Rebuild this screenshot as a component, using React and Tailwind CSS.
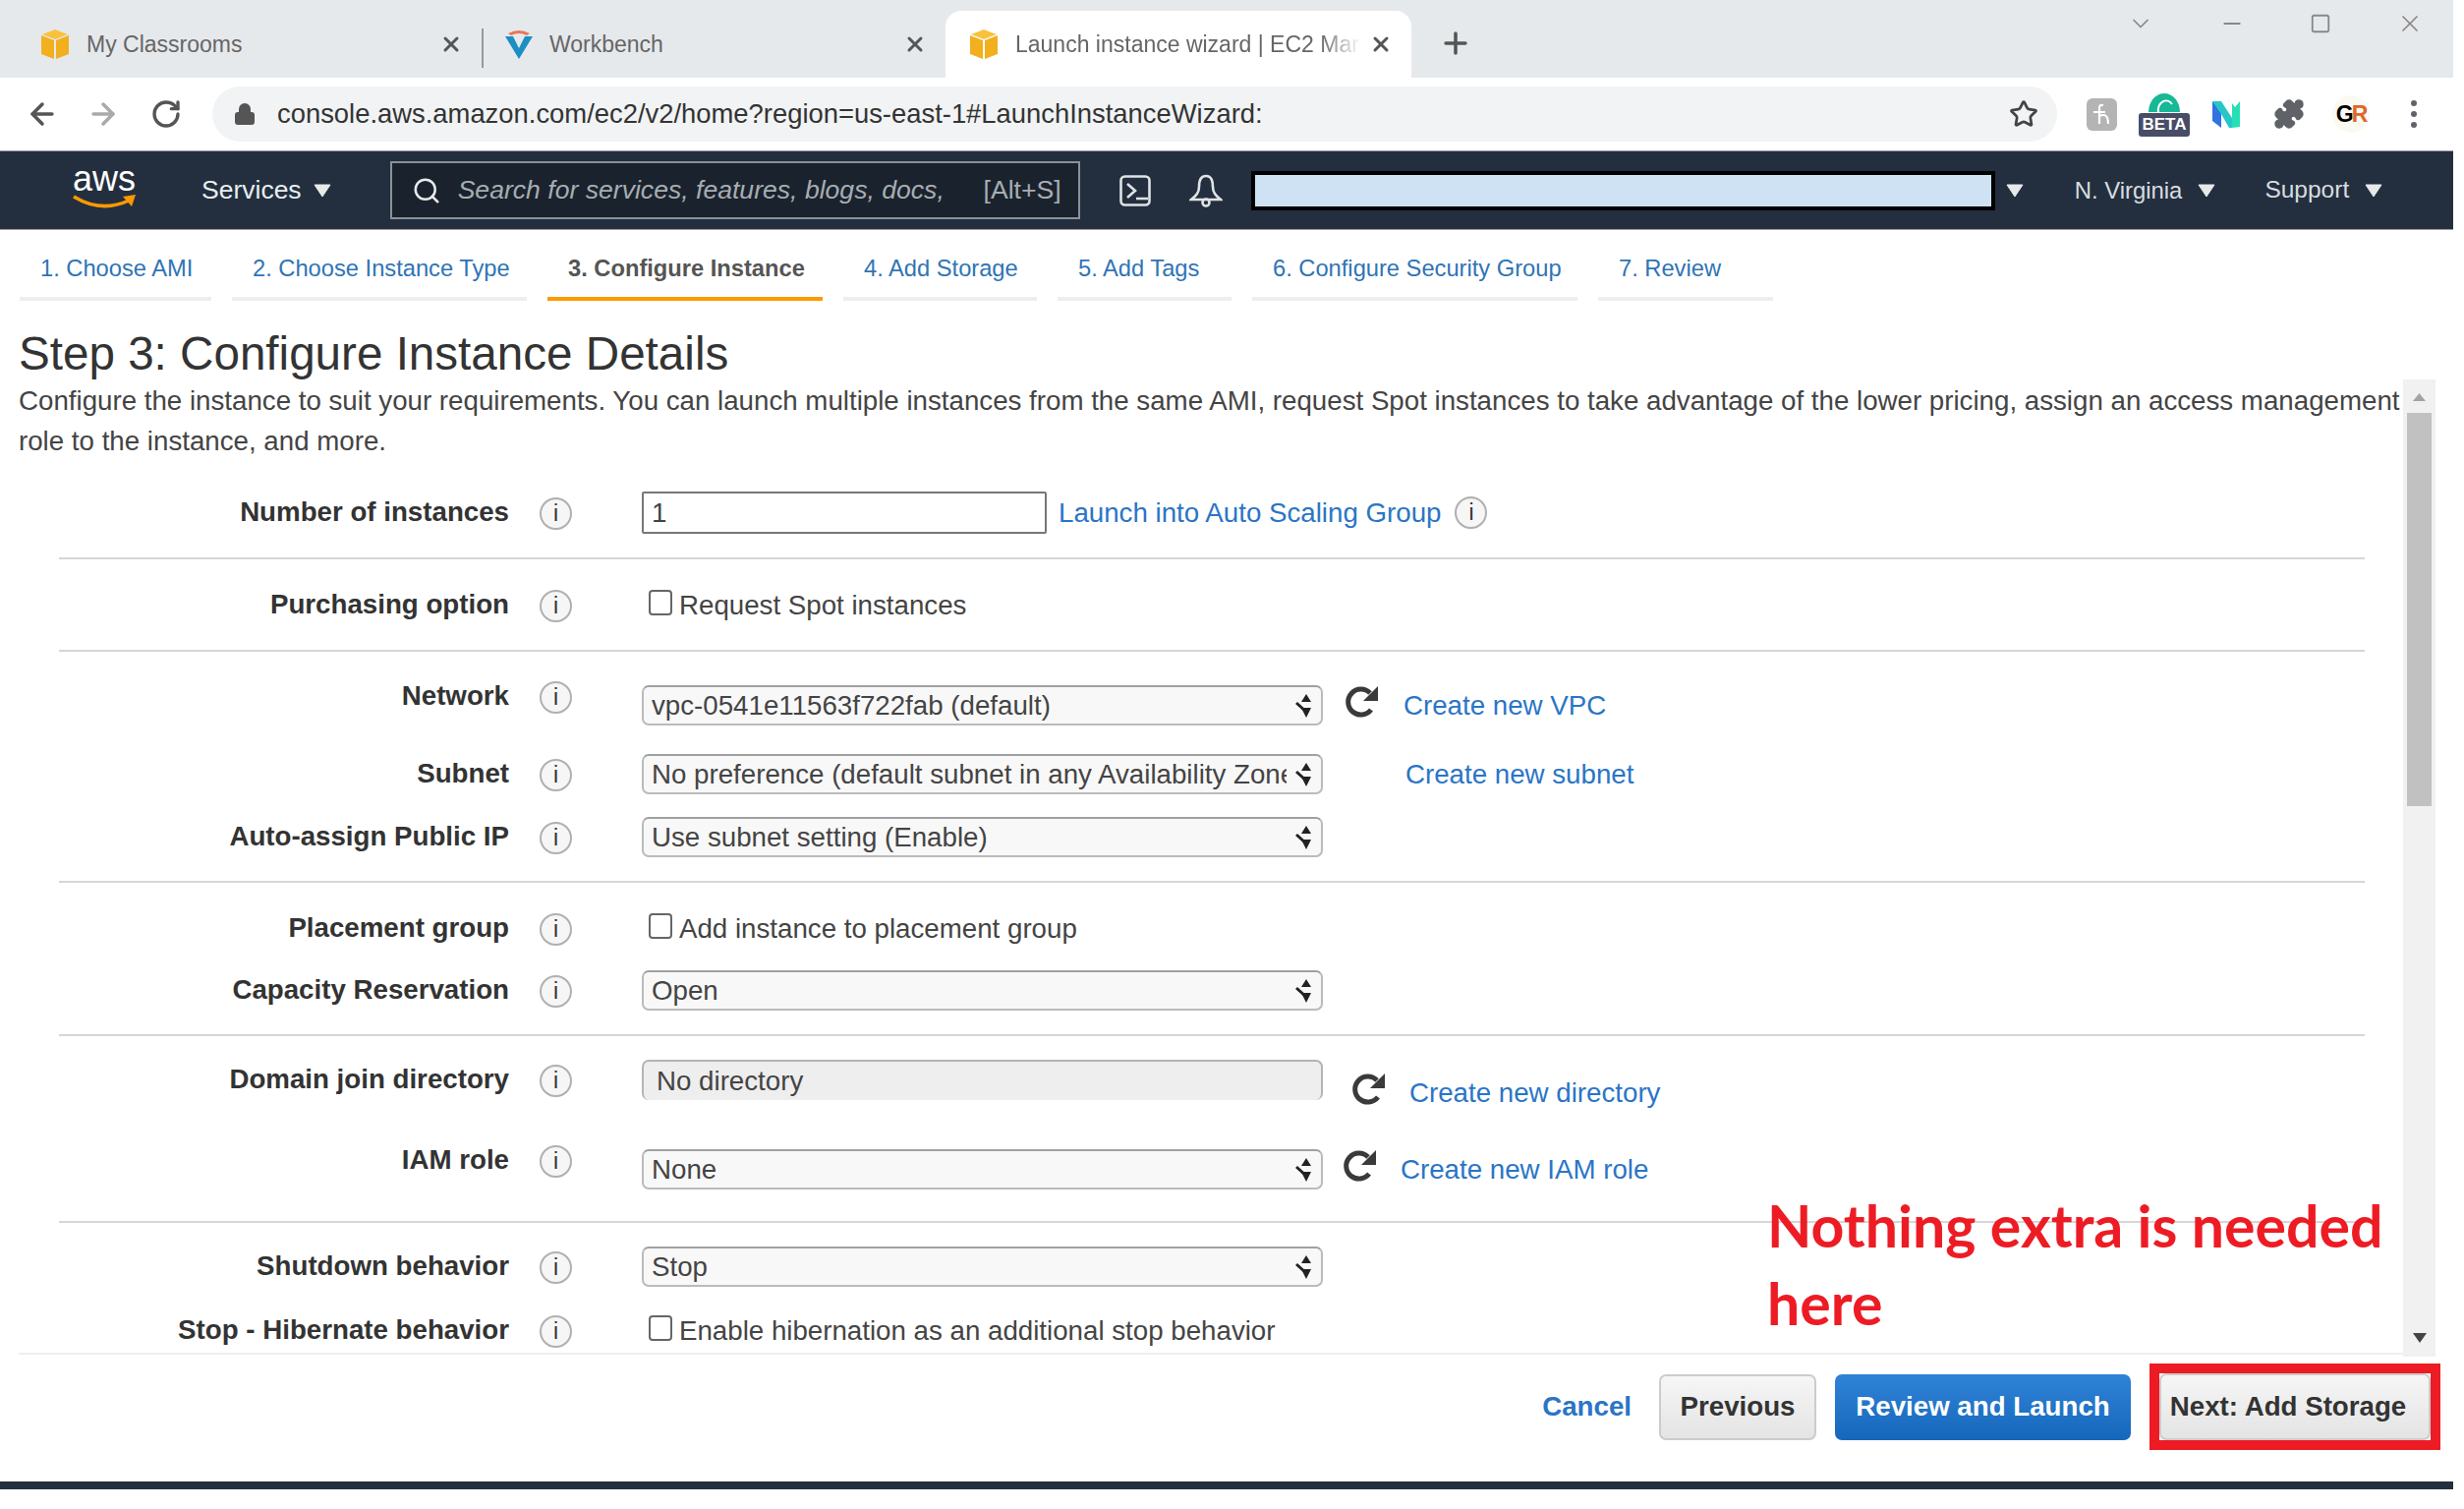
import React from 'react';
import { ArrowLeft, ArrowRight, RotateCw, Lock, Star, Plus, X, Minus, Square, ChevronDown, Search, Puzzle } from 'lucide-react';

const Cube = () => (
  <svg width="30" height="32" viewBox="0 0 30 32" className="shrink-0">
    <path d="M15 1 L28 6 L15 11 L2 6 Z" fill="#f9c23c" />
    <path d="M1 7 L14 12 V31 L1 26 Z" fill="#f2b01e" />
    <path d="M29 7 L16 12 V31 L29 26 Z" fill="#f2b01e" />
  </svg>
);

const Caret = ({ className }) => (
  <svg width="18" height="14" viewBox="0 0 18 14" className={className}><path d="M1 1H17L9 13Z" fill="#e8eaea" stroke="#e8eaea" strokeLinejoin="round" /></svg>
);

const Info = () => (
  <span className="flex h-[33px] w-[33px] shrink-0 items-center justify-center rounded-full border-2 border-[#b0b0b0] bg-[#f6f6f6] text-[23px] leading-none text-[#333]">i</span>
);

const Refresh = () => (
  <svg width="35" height="35" viewBox="0 0 35 35" fill="none" className="mt-[-6px] block">
    <path d="M27 25 A13 13 0 1 1 26 8" stroke="#3a3a3a" strokeWidth="5" />
    <path d="M34 1 V16 H19 Z" fill="#3a3a3a" />
  </svg>
);

const Select = ({ value }) => (
  <div className="flex h-[41px] w-[693px] items-center rounded-[7px] border-2 border-[#bbb] border-t-[#a0a0a0] bg-[#f8f8f8] pl-[8px] pr-[9px]">
    <span className="mr-[9px] min-w-0 flex-1 overflow-hidden whitespace-nowrap">{value}</span>
    <svg width="17" height="24" viewBox="0 0 17 24" className="shrink-0">
      <path d="M11 0 L16 8 H6 Z M11 24 L16 14 H6 Z" fill="#222" />
      <path d="M1 9 L11 18" stroke="#222" strokeWidth="3" />
    </svg>
  </div>
);

const Link = ({ children, className = '' }) => <a className={`text-[#2a75c6] ${className}`}>{children}</a>;

// every form row is one 41px control high, the spacing comes from its margin class
const Row = ({ label, className = '', up, children }) => (
  <div className={`flex h-[41px] items-center ${className}`}>
    <div className={`w-[518px] shrink-0 whitespace-nowrap text-right font-bold text-[#333] ${up ? 'mt-[-20px]' : 'mt-[-2px]'}`}>{label}</div>
    <div className={`w-[135px] shrink-0 pl-[31px] ${up ? 'mt-[-16px]' : 'mt-[2px]'}`}><Info /></div>
    <div className="flex items-center whitespace-nowrap">{children}</div>
  </div>
);

const Divider = ({ className = '' }) => <div className={`ml-[60px] h-[2px] w-[2346px] bg-[#d6d6d6] ${className}`} />;

const Checkbox = ({ children }) => (
  <div className="flex items-center pl-[7px]">
    <span className="mb-[6px] h-[26px] w-[24px] rounded-[4px] border-2 border-[#666] bg-white" />
    <span className="ml-[7px]">{children}</span>
  </div>
);

const Step = ({ w, active, children }) => (
  <div className={`flex h-[63px] items-center whitespace-nowrap border-b-4 pl-[21px] pt-[2px] text-[23.7px] ${w} ${active ? 'border-[#ff9900] font-bold text-[#555]' : 'border-[#eee] text-[#2f74b5]'}`}>{children}</div>
);

const Tab = ({ className, icon, iconGap, title, active }) => (
  <div className={`flex h-[68px] items-center text-[23px] ${className} ${active ? 'rounded-t-[16px] bg-white' : ''}`}>
    {icon}
    <span className={`min-w-0 flex-1 overflow-hidden whitespace-nowrap text-[#666] ${iconGap}`}>{title}</span>
    <X size={24} strokeWidth={3} className="ml-[8px] mr-[19px] shrink-0 text-[#555]" />
  </div>
);

export default function App() {
  return (
    <div className="relative h-[1535px] w-[2507px] overflow-hidden bg-white font-['Liberation_Sans',Arial,sans-serif] text-[#444]">
      {/* tabs */}
      <div className="mr-[11px] flex h-[79px] items-end bg-[#e6e9ec]">
        <Tab className="w-[490px] pl-[41px]" iconGap="ml-[17px]" title="My Classrooms" icon={<Cube />} />
        <div className="mb-[10px] h-[40px] w-[2px] bg-[#999]" />
        <Tab className="w-[470px] pl-[21px]" iconGap="ml-[16px]" title="Workbench" icon={
          <svg width="30" height="32" viewBox="0 0 30 32" className="shrink-0">
            <path d="M1 8 L15 31 L29 8 H21 L15 20 L9 8 Z" fill="#1b8fc4" />
            <path d="M4 5 Q15 -1 26 5 L23 7 Q15 3 7 7 Z" fill="#e8765a" />
          </svg>
        } />
        <Tab className="w-[474px] pl-[24px]" iconGap="ml-[17px] [mask-image:linear-gradient(to_right,black_88%,transparent)]" title="Launch instance wizard | EC2 Mar" icon={<Cube />} active />
        <Plus size={34} strokeWidth={2.5} className="mb-[18px] ml-[28px] text-[#555]" />
        <div className="mb-[30px] ml-auto flex h-[50px] items-center gap-[66px] pr-[30px] text-[#888]">
          <ChevronDown size={28} strokeWidth={1.5} />
          <Minus size={26} />
          <Square size={22} strokeWidth={2} />
          <X size={28} strokeWidth={1.5} />
        </div>
      </div>
      {/* address bar */}
      <div className="mr-[11px] flex h-[74px] items-center">
        <ArrowLeft size={34} strokeWidth={2.5} className="ml-[26px] text-[#555]" />
        <ArrowRight size={34} strokeWidth={2.5} className="ml-[28px] text-[#aaa]" />
        <RotateCw size={32} strokeWidth={2.5} className="ml-[31px] text-[#555]" />
        <div className="ml-[31px] flex h-[56px] w-[1877px] items-center rounded-full bg-[#f1f3f4] pl-[21px] pr-[19px]">
          <Lock size={24} fill="#555" className="text-[#555]" />
          <span className="ml-[21px] flex-1 whitespace-nowrap text-[27.4px] text-[#333]">console.aws.amazon.com/ec2/v2/home?region=us-east-1#LaunchInstanceWizard:</span>
          <Star size={30} strokeWidth={2.2} className="text-[#444]" />
        </div>
        <svg width="31" height="33" viewBox="0 0 31 33" className="ml-[30px] shrink-0">
          <rect width="31" height="33" rx="6" fill="#b4b4b4" />
          <path d="M13 26 V10 Q13 6 17 7 M7 14 H19 M13 18 Q22 14 22 26" fill="none" stroke="#fff" strokeWidth="2.2" />
        </svg>
        <div className="relative ml-[22px] h-[44px] w-[52px] shrink-0">
          <svg width="52" height="20" viewBox="0 0 52 20"><path d="M10 20 A16 19 0 0 1 42 20 Z" fill="#16b896" /><path d="M20 20 A8 10 0 0 1 34 12" fill="none" stroke="#fff" strokeWidth="2" /></svg>
          <span className="absolute left-0 top-[21px] w-[52px] rounded-[3px] bg-[#474d66] text-center text-[17px] font-bold leading-[24px] text-white">BETA</span>
        </div>
        <svg width="30" height="30" viewBox="0 0 30 30" className="ml-[22px] shrink-0">
          <path d="M1 2 L10 9 V29 L1 22 Z" fill="#2f74e0" />
          <path d="M1 2 L10 2 L21 19 V29 H18 L10 15 Z" fill="#27c7c9" />
          <path d="M21 4 L24 8 L29 2 V28 L21 29 Z" fill="#24e0b4" />
        </svg>
        <Puzzle size={32} fill="#5f6368" className="ml-[33px] shrink-0 text-[#5f6368]" />
        <div className="ml-[28px] flex h-[38px] w-[38px] shrink-0 items-center justify-center rounded-full bg-[#fafaf2] text-[23px] font-bold tracking-[-2px]"><span className="text-black">G</span><span className="text-[#e0662a]">R</span></div>
        <div className="ml-[42px] flex flex-col gap-[5px]">
          <span className="h-[6px] w-[6px] rounded-full bg-[#5f6368]" />
          <span className="h-[6px] w-[6px] rounded-full bg-[#5f6368]" />
          <span className="h-[6px] w-[6px] rounded-full bg-[#5f6368]" />
        </div>
      </div>
      {/* aws console nav */}
      <div className="mr-[11px] flex h-[81px] items-center border-y border-[#9aa0a6] bg-[#232f3e] text-white">
        <div className="ml-[73px] flex w-[66px] flex-col items-center">
          <span className="mt-[-6px] text-[36px] leading-[30px]">aws</span>
          <svg width="66" height="18" viewBox="0 0 66 18"><path d="M2 3 Q30 20 58 7" fill="none" stroke="#f90" strokeWidth="3.5" /><path d="M52 3 L65 1 L61 13 Z" fill="#f90" /></svg>
        </div>
        <span className="ml-[66px] text-[26.5px] text-[#e8eef2]">Services</span>
        <Caret className="ml-[12px]" />
        <div className="ml-[60px] flex h-[59px] w-[702px] items-center border-2 border-[#8a9199] bg-[#1a222d] pl-[20px] pr-[17px] text-[26.6px] italic text-[#a7adb3]">
          <Search size={30} className="shrink-0 text-[#e8eaea]" />
          <span className="ml-[17px] flex-1 whitespace-nowrap">Search for services, features, blogs, docs,</span>
          <span className="not-italic">[Alt+S]</span>
        </div>
        <svg width="32" height="32" viewBox="0 0 32 32" fill="none" stroke="#e0e3e4" strokeWidth="2.6" className="ml-[40px] shrink-0"><rect x="1.5" y="1.5" width="29" height="29" rx="4" /><path d="M8 9 L16 16 L8 23 M17 24 H29" /></svg>
        <svg width="34" height="34" viewBox="0 0 34 34" fill="none" stroke="#e0e3e4" strokeWidth="2.6" className="ml-[39px] shrink-0"><path d="M17 2 C11 2 10 8 10 13 C10 19 7 22 2 26 H32 C27 22 24 19 24 13 C24 8 23 2 17 2 Z" /><circle cx="17" cy="29" r="3.5" /></svg>
        <div className="ml-[29px] h-[40px] w-[757px] shrink-0 border-[4px] border-black bg-[#cfe2f3]" />
        <Caret className="ml-[11px]" />
        <span className="ml-[52px] whitespace-nowrap text-[23.9px] text-[#d8dde0]">N. Virginia</span>
        <Caret className="ml-[16px]" />
        <span className="ml-[50px] text-[24.5px] text-[#d8dde0]">Support</span>
        <Caret className="ml-[16px]" />
      </div>
      {/* wizard steps */}
      <div className="flex gap-[21px] pl-[20px] pt-[9px]">
        <Step w="w-[195px]">1. Choose AMI</Step>
        <Step w="w-[300px]">2. Choose Instance Type</Step>
        <Step w="w-[280px]" active>3. Configure Instance</Step>
        <Step w="w-[197px]">4. Add Storage</Step>
        <Step w="w-[177px]">5. Add Tags</Step>
        <Step w="w-[331px]">6. Configure Security Group</Step>
        <Step w="w-[178px]">7. Review</Step>
      </div>
      <h1 className="ml-[19px] mt-[27px] text-[47.6px] leading-[53px] text-[#333]">Step 3: Configure Instance Details</h1>
      {/* scrolling form */}
      <div className="ml-[19px] flex h-[994px] text-[27.7px]">
        <div className="h-[992px] w-[2426px] overflow-hidden border-b-2 border-[#eee]">
          <p className="whitespace-nowrap pt-[1px] leading-[41px]">Configure the instance to suit your requirements. You can launch multiple instances from the same AMI, request Spot instances to take advantage of the lower pricing, assign an access management<br />role to the instance, and more.</p>
          <div className="ml-[-19px]">
            <Row label="Number of instances" className="mt-[32px]">
              <div className="flex h-[43px] w-[412px] items-center rounded-[2px] border-2 border-[#777] pl-[8px]">1</div>
              <Link className="ml-[12px]">Launch into Auto Scaling Group</Link>
              <span className="ml-[14px]"><Info /></span>
            </Row>
            <Divider className="mt-[25px]" />
            <Row label="Purchasing option" className="mt-[26px]"><Checkbox>Request Spot instances</Checkbox></Row>
            <Divider className="mt-[25px]" />
            <Row label="Network" className="mt-[34px]" up>
              <Select value="vpc-0541e11563f722fab (default)" />
              <span className="ml-[22px]"><Refresh /></span>
              <Link className="ml-[25px]">Create new VPC</Link>
            </Row>
            <Row label="Subnet" className="mt-[29px]">
              <Select value="No preference (default subnet in any Availability Zone)" />
              <Link className="ml-[84px]">Create new subnet</Link>
            </Row>
            <Row label="Auto-assign Public IP" className="mt-[23px]"><Select value="Use subnet setting (Enable)" /></Row>
            <Divider className="mt-[24px]" />
            <Row label="Placement group" className="mt-[26px]"><Checkbox>Add instance to placement group</Checkbox></Row>
            <Row label="Capacity Reservation" className="mt-[22px]"><Select value="Open" /></Row>
            <Divider className="mt-[24px]" />
            <Row label="Domain join directory" className="mt-[24px]">
              <div className="flex h-[41px] w-[693px] items-center rounded-[7px] border-t-2 border-l-2 border-r-2 border-[#b4b4b4] bg-[#eee] pl-[13px]">No directory</div>
              <span className="ml-[29px] translate-y-[13px]"><Refresh /></span>
              <Link className="ml-[24px] translate-y-[13px]">Create new directory</Link>
            </Row>
            <Row label="IAM role" className="mt-[50px]" up>
              <Select value="None" />
              <span className="ml-[20px]"><Refresh /></span>
              <Link className="ml-[24px]">Create new IAM role</Link>
            </Row>
            <Divider className="mt-[32px]" />
            <Row label="Shutdown behavior" className="mt-[24px]"><Select value="Stop" /></Row>
            <Row label="Stop - Hibernate behavior" className="mt-[24px]"><Checkbox>Enable hibernation as an additional stop behavior</Checkbox></Row>
          </div>
        </div>
        {/* scrollbar */}
        <div className="flex h-[994px] w-[33px] flex-col items-center bg-[#f1f1f1]">
          <svg width="25" height="34" viewBox="0 0 25 34" className="shrink-0"><path d="M6 22 H19 L12.5 14 Z" fill="#a3a3a3" /></svg>
          <div className="h-[400px] w-[25px] bg-[#c1c1c1]" />
          <div className="flex flex-1 items-end pb-[14px]">
            <svg width="14" height="10" viewBox="0 0 14 10"><path d="M0 0 H14 L7 10 Z" fill="#444" /></svg>
          </div>
        </div>
      </div>
      {/* footer buttons */}
      <div className="mr-[24px] flex h-[102px] items-center justify-end text-[27.7px] font-bold">
        <Link className="mr-[28px]">Cancel</Link>
        <div className="flex h-[67px] w-[160px] items-center justify-center rounded-[7px] border-2 border-[#ccc] bg-gradient-to-b from-[#f6f6f6] to-[#e4e4e4] text-[#333]">Previous</div>
        <div className="ml-[19px] flex h-[67px] w-[301px] items-center justify-center rounded-[7px] bg-gradient-to-b from-[#2f83d6] to-[#1467bb] text-white">Review and Launch</div>
        <div className="ml-[19px] border-[10px] border-[#ed1c24]">
          <div className="flex h-[68px] w-[276px] items-center justify-center whitespace-nowrap rounded-[7px] border-2 border-[#ccc] bg-gradient-to-b from-[#f6f6f6] to-[#e4e4e4] pr-[14px] text-[#333]">Next: Add Storage</div>
        </div>
      </div>
      {/* bottom console bar */}
      <div className="mr-[11px] mt-[25px] h-[8px] bg-[#232f3e]" />
      {/* annotation */}
      <div className="absolute left-[1798px] top-[1207px] font-['Lato',sans-serif] text-[59px] font-bold leading-[79px] text-[#ed1c24]">
        Nothing extra is needed<br />here
      </div>
    </div>
  );
}
